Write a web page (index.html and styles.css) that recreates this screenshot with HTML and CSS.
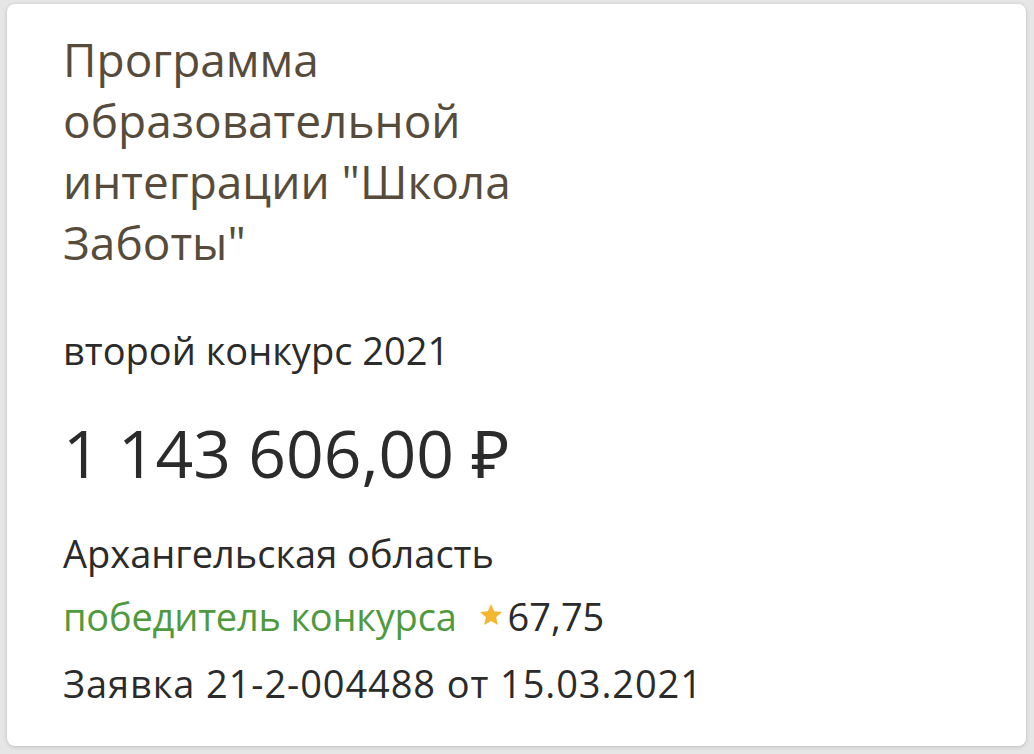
FILE: index.html
```html
<!DOCTYPE html>
<html lang="ru">
<head>
<meta charset="utf-8">
<title>Заявка</title>
<link rel="stylesheet" href="styles.css">
</head>
<body>
<div class="card">
  <h1 class="title">Программа образовательной интеграции "Школа Заботы"</h1>
  <div class="contest">второй конкурс 2021</div>
  <div class="amount">1 143 606,00 ₽</div>
  <div class="region">Архангельская область</div>
  <div class="status">
    <span class="winner">победитель конкурса</span>
    <span class="score"><svg class="star" viewBox="0 0 24 24" width="24" height="24"><path d="M12 1l3.2 7.3 7.8.7-5.9 5.2 1.8 7.8L12 17.9 5.1 22l1.8-7.8L1 9l7.8-.7z" fill="#f2b631"/></svg>67,75</span>
  </div>
  <div class="request">Заявка 21-2-004488 от 15.03.2021</div>
</div>
</body>
</html>
```
FILE: styles.css
```css
html, body {
  margin: 0;
  padding: 0;
}
body {
  background: #e6e6e6;
  width: 1034px;
  height: 754px;
  padding: 4px 8px 0 7px;
  box-sizing: border-box;
  font-family: "Open Sans", "Noto Sans", sans-serif;
  color: #2b2b2b;
}
.card {
  background: #fff;
  border-radius: 8px;
  box-shadow: 0 1px 4px rgba(0,0,0,0.18);
  height: 742px;
  box-sizing: border-box;
  padding: 25px 40px 0 56px;
}
.title {
  margin: 0;
  font-weight: 400;
  font-size: 46px;
  line-height: 61px;
  color: #574c3c;
  width: 520px;
}
.contest {
  margin-top: 55px;
  font-size: 38px;
  line-height: 44px;
}
.amount {
  margin-top: 44px;
  font-size: 66px;
  line-height: 72px;
}
.region {
  margin-top: 43px;
  font-size: 38px;
  line-height: 44px;
}
.status {
  margin-top: 19px;
  display: flex;
  align-items: center;
  font-size: 38px;
  line-height: 44px;
}
.winner {
  color: #4f9a3d;
  letter-spacing: -0.2px;
}
.score {
  display: flex;
  align-items: center;
  margin-left: 22px;
}
.star {
  margin-right: 5px;
  margin-top: -3px;
}
.request {
  margin-top: 23px;
  font-size: 38px;
  line-height: 44px;
  letter-spacing: 0.9px;
}
```
